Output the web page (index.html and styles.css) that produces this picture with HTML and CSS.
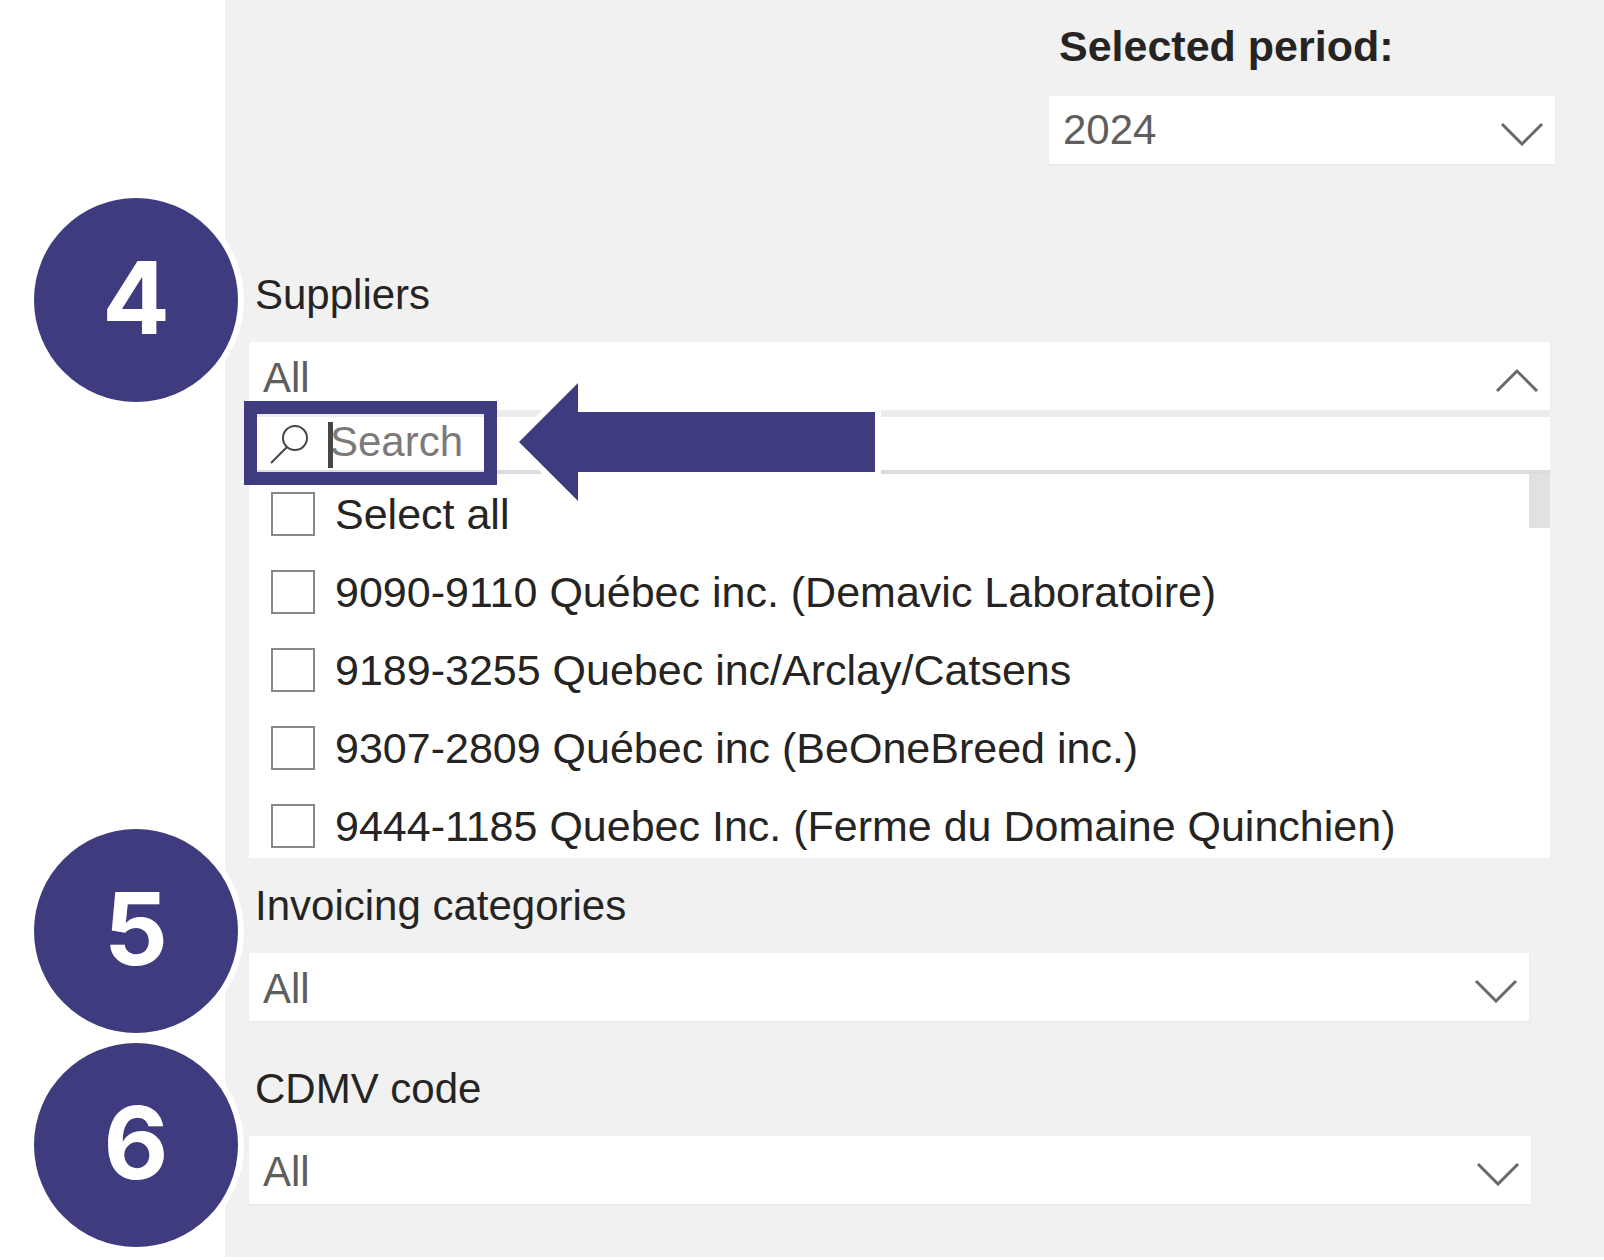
FILE: index.html
```html
<!DOCTYPE html>
<html lang="en">
	<head>
		<meta charset="UTF-8" />
		<meta name="viewport" content="width=device-width, initial-scale=1.0" />
		<title>Report filters</title>
		<link rel="stylesheet" href="styles.css">
	</head>
	<body>
		<div class="guide">
			<div class="steps">
				<div class="step">4</div>
				<div class="step step-categories">5</div>
				<div class="step">6</div>
			</div>
			<form class="panel">
				<div class="field period">
					<label for="period">Selected period:</label>
					<div class="dropdown">
						<select id="period"><option>2024</option></select>
						<svg class="chevron" viewBox="0 0 44 24"><path d="M2 2 L22 22 L42 2" /></svg>
					</div>
				</div>

				<div class="field suppliers">
					<label for="suppliers">Suppliers</label>
					<div class="dropdown">
						<button type="button" id="suppliers" aria-expanded="true">All</button>
						<svg class="chevron" viewBox="0 0 44 24"><path d="M2 23 L22 3 L42 23" /></svg>
					</div>
					<div class="search">
						<svg class="search-icon" viewBox="0 0 40 42">
							<circle cx="26" cy="15" r="12" />
							<path d="M18 24 L2 40" />
						</svg>
						<input type="text" placeholder="Search" aria-label="Search suppliers" />
						<span class="caret"></span>
						<!-- callout over the search box -->
						<div class="highlight"></div>
						<svg class="arrow" viewBox="0 0 380 132">
							<path class="arrow-outline" d="M9 66 L68 7 V36 H365 V96 H68 V125 Z" />
							<path class="arrow-body" d="M9 66 L68 7 V36 H365 V96 H68 V125 Z" />
						</svg>
					</div>
					<div class="options">
						<label class="option"><input type="checkbox" />Select all</label>
						<label class="option"><input type="checkbox" />9090-9110 Québec inc. (Demavic Laboratoire)</label>
						<label class="option"><input type="checkbox" />9189-3255 Quebec inc/Arclay/Catsens</label>
						<label class="option"><input type="checkbox" />9307-2809 Québec inc (BeOneBreed inc.)</label>
						<label class="option"><input type="checkbox" />9444-1185 Quebec Inc. (Ferme du Domaine Quinchien)</label>
						<span class="scroll-thumb"></span>
					</div>
				</div>

				<div class="field categories">
					<label for="categories">Invoicing categories</label>
					<div class="dropdown">
						<select id="categories"><option>All</option></select>
						<svg class="chevron" viewBox="0 0 44 24"><path d="M2 2 L22 22 L42 2" /></svg>
					</div>
				</div>

				<div class="field code">
					<label for="code">CDMV code</label>
					<div class="dropdown">
						<select id="code"><option>All</option></select>
						<svg class="chevron" viewBox="0 0 44 24"><path d="M2 2 L22 22 L42 2" /></svg>
					</div>
				</div>
			</form>
		</div>
	</body>
</html>
```
FILE: styles.css
```css
* {
	box-sizing: border-box;
}
body {
	margin: 0;
	background: #fff;
	color: #252423;
	font-family: "Liberation Sans", Arial, sans-serif;
	font-size: 42px;
	line-height: 48px;
}
.guide {
	display: grid;
	grid-template-columns: 225px 1fr;
}

/* numbered circles */
.steps {
	position: relative;
	z-index: 1;
	display: flex;
	flex-direction: column;
	gap: 10px;
	padding: 198px 0 0 34px;
}
.step {
	display: flex;
	align-items: center;
	justify-content: center;
	width: 204px;
	height: 204px;
	padding-bottom: 4px;
	border-radius: 50%;
	background: #3e3c7e;
	box-shadow: 0 0 0 6px #fff;
	color: #fff;
	font-family: Inter, sans-serif;
	font-size: 100px;
	font-weight: 700;
}
.step-categories {
	margin-top: 417px;
}

/* filter panel */
.panel {
	padding: 22px 49px 53px 24px;
	background: #f1f1f1;
}
.field > label {
	display: block;
	margin-bottom: 23px;
	padding-left: 6px;
}
.period {
	width: 506px;
	margin-left: auto;
	margin-bottom: 107px;
}
.period > label {
	margin-bottom: 26px;
	padding-left: 10px;
	font-size: 43px;
	font-weight: bold;
}
.suppliers {
	margin-right: 5px;
	margin-bottom: 24px;
}
.categories {
	margin-right: 26px;
	margin-bottom: 44px;
}
.code {
	margin-right: 24px;
}

.dropdown {
	position: relative;
	background: #fff;
	box-shadow: 0 1px 0 1px #ececec;
}
.dropdown select,
.dropdown button {
	appearance: none;
	display: block;
	width: 100%;
	height: 68px;
	margin: 0;
	padding: 12px 14px 8px;
	border: 0;
	border-radius: 0;
	background: none;
	color: #605e5c;
	font: inherit;
	text-align: left;
}
.period select {
	padding: 10px 14px;
}
.chevron {
	position: absolute;
	top: 26px;
	right: 11px;
	width: 44px;
	height: 24px;
	fill: none;
	stroke: #6b6967;
	stroke-width: 3;
	pointer-events: none;
}

.search {
	position: relative;
	z-index: 1;
	display: flex;
	align-items: center;
	height: 64px;
	padding-left: 20px;
	border-top: 7px solid #ececec;
	border-bottom: 4px solid #dcdcdc;
	background: #fff;
}
.search-icon {
	width: 40px;
	height: 42px;
	fill: none;
	stroke: #484644;
	stroke-width: 2;
}
.search input {
	flex: 1;
	min-width: 0;
	height: 48px;
	margin-left: 21px;
	padding: 0 0 4px;
	border: 0;
	outline: 0;
	background: none;
	color: #252423;
	font: inherit;
}
.search input::placeholder {
	color: #7c7a79;
}
.caret {
	position: absolute;
	top: 5px;
	left: 79px;
	width: 5px;
	height: 46px;
	background: #484644;
}
.highlight {
	position: absolute;
	top: -16px;
	left: -5px;
	width: 253px;
	height: 84px;
	border: 13px solid #3e3c7e;
}
.arrow {
	position: absolute;
	top: -41px;
	left: 261px;
	width: 380px;
	height: 132px;
}
.arrow-outline {
	fill: #fff;
	stroke: #fff;
	stroke-width: 12;
}
.arrow-body {
	fill: #3e3c7e;
}

.options {
	position: relative;
	height: 384px;
	overflow: hidden;
	background: #fff;
	font-size: 43px;
}
.option {
	display: flex;
	align-items: center;
	gap: 20px;
	height: 78px;
	padding-top: 2px;
	padding-left: 22px;
	white-space: nowrap;
}
.option input {
	appearance: none;
	flex: none;
	width: 44px;
	height: 44px;
	margin: 0;
	border: 2px solid #8a8886;
	background: #fff;
}
.scroll-thumb {
	position: absolute;
	top: 0;
	right: 0;
	width: 21px;
	height: 54px;
	background: #e1e1e1;
}
```
